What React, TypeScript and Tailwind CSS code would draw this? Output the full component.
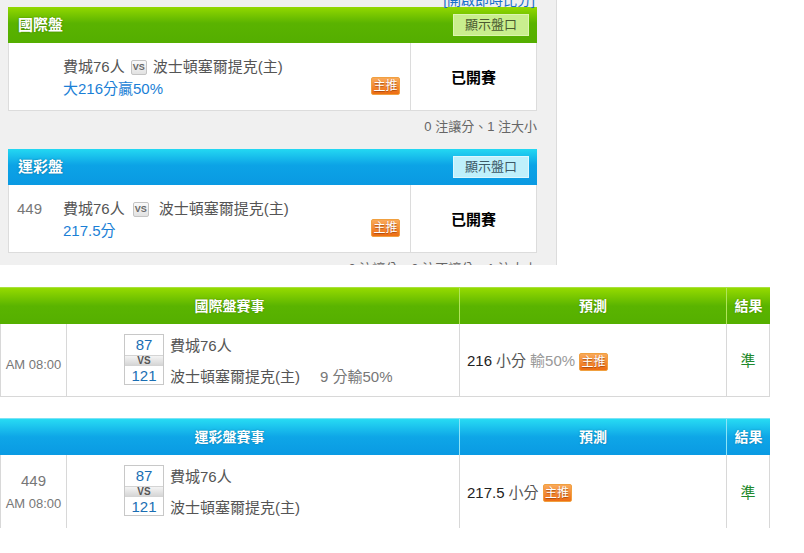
const FONT = "font-['Liberation_Sans','Noto_Sans_CJK_TC',sans-serif]";

function Badge() {
  return (
    <span className="inline-flex h-[18px] w-[29px] items-center justify-center rounded-[2px] border border-[#f0a040] bg-[linear-gradient(#f9a95a,#ee6d12)] text-[12px] leading-none text-white [text-shadow:0_1px_1px_rgba(120,40,0,0.6)]">
      主推
    </span>
  );
}

function VsIcon({ className }: { className: string }) {
  return (
    <span
      className={`inline-flex h-[15px] w-[16px] items-center justify-center rounded-[2px] border border-[#c4c4c4] bg-[linear-gradient(#fafafa,#e2e2e2)] text-[9px] font-bold leading-none text-[#666] ${className}`}
    >
      VS
    </span>
  );
}

type CardProps = {
  title: string;
  tone: "green" | "blue";
  num?: string;
  line: string;
  gap: string;
  note: string;
};

function OddsCard({ title, tone, num, line, gap, note }: CardProps) {
  const head =
    tone === "green"
      ? "bg-[linear-gradient(#93d800,#5ab300_45%,#54ae00)]"
      : "bg-[linear-gradient(#24d8f2,#0ca3e6_45%,#0a99e2)]";
  const btn =
    tone === "green"
      ? "bg-[#c9ee8e] border-[#dcf6b0] text-[#4a5a30]"
      : "bg-[#bff0fb] border-[#dcf8ff] text-[#3c5866]";

  return (
    <div className="ml-[8px] mr-[19px]">
      <div className={`flex h-[36px] items-center justify-between pl-[10px] pr-[8px] ${head}`}>
        <span className="text-[15px] font-bold text-white [text-shadow:0_0_2px_rgba(0,0,0,0.35)]">
          {title}
        </span>
        <span
          className={`flex h-[22px] w-[76px] items-center justify-center border text-[13px] ${btn}`}
        >
          顯示盤口
        </span>
      </div>
      <div className="flex h-[68px] border border-t-0 border-[#dcdcdc] bg-white">
        <div className="flex flex-1">
          <div className="w-[54px] pl-[8px] pt-[13px] text-[15px] leading-[22px] text-[#777]">
            {num}
          </div>
          <div className="flex-1 pt-[13px] text-[15px] leading-[22px]">
            <div className="flex items-center text-[#555]">
              <span>費城76人</span>
              <VsIcon className={gap} />
              <span>波士頓塞爾提克(主)</span>
            </div>
            <div className="text-[#1b7fd6]">{line}</div>
          </div>
          <div className="mb-[13px] mr-[10px] self-end">
            <Badge />
          </div>
        </div>
        <div className="flex w-[126px] items-center justify-center border-l border-[#dcdcdc] pt-[3px] text-[15px] font-bold text-black">
          已開賽
        </div>
      </div>
      <div className="h-[38px] pt-[6px] text-right text-[13px] leading-[20px] text-[#666]">
        {note}
      </div>
    </div>
  );
}

function ScoreBox() {
  return (
    <div className="flex w-[40px] flex-col border border-[#c8c8c8] text-center text-[15px] text-[#1a6eb3]">
      <div className="h-[20px] leading-[20px]">87</div>
      <div className="h-[11px] border-y border-[#d4d4d4] bg-[linear-gradient(#f4f4f4,#d6d6d6)] text-[10px] font-bold leading-[9px] text-[#555]">
        VS
      </div>
      <div className="h-[18px] leading-[19px]">121</div>
    </div>
  );
}

type TableProps = {
  title: string;
  tone: "green" | "blue";
  num?: string;
  extra?: string;
  pred: string;
  lose?: string;
  last?: boolean;
};

function ResultTable({ title, tone, num, extra, pred, lose, last }: TableProps) {
  const head =
    tone === "green"
      ? "bg-[linear-gradient(#95da00,#5ab400_50%,#55af00)] border-t-[#a8e23c]"
      : "bg-[linear-gradient(#27dbf3,#0ea6e7_50%,#0a9ae3)] border-t-[#7be3f5]";
  const sep = tone === "green" ? "border-[#b0e45a]" : "border-[#8de4f7]";
  const cell = "border-[#d8d8d8]";

  return (
    <div className="w-[770px]">
      <div
        className={`grid h-[37px] grid-cols-[459px_267px_44px] border-t text-[14px] font-bold text-white [text-shadow:0_0_2px_rgba(0,0,0,0.3)] ${head}`}
      >
        <div className="flex items-center justify-center">{title}</div>
        <div className={`flex items-center justify-center border-l ${sep}`}>預測</div>
        <div className={`flex items-center justify-center border-l ${sep}`}>結果</div>
      </div>
      <div
        className={`grid h-[73px] grid-cols-[65px_393px_267px_44px] border-l ${cell} ${last ? "" : "border-b"}`}
      >
        <div className="flex flex-col items-center justify-center text-[13px] text-[#777]">
          {num ? (
            <>
              <span className="text-[15px] leading-[24px]">{num}</span>
              <span className="leading-[22px]">AM 08:00</span>
            </>
          ) : (
            <span className="pt-[10px]">AM 08:00</span>
          )}
        </div>
        <div className={`flex items-start border-l pl-[57px] pt-[10px] ${cell}`}>
          <ScoreBox />
          <div className="ml-[6px] flex flex-col text-[15px] text-[#555]">
            <span className="leading-[24px]">費城76人</span>
            <span className="mt-[7px] leading-[24px]">
              波士頓塞爾提克(主)
              {extra && <span className="ml-[20px] text-[#777]">{extra}</span>}
            </span>
          </div>
        </div>
        <div className={`flex items-center gap-[4px] border-l pl-[7px] pt-[3px] text-[15px] ${cell}`}>
          <span className="text-[#222]">{pred}</span>
          <span className="text-[#555]">小分</span>
          {lose && <span className="text-[#999]">{lose}</span>}
          <Badge />
        </div>
        <div
          className={`flex items-center justify-center border-x pt-[3px] text-[15px] text-[#1f8a2e] ${cell}`}
        >
          準
        </div>
      </div>
    </div>
  );
}

export default function App() {
  return (
    <div className={`h-[553px] w-[804px] overflow-hidden bg-white ${FONT}`}>
      <div className="h-[265px] w-[557px] overflow-hidden border-r border-[#dcdcdc] bg-[#f0f0f0]">
        <div className="flex h-[7px] items-end justify-end pr-[21px]">
          <span className="shrink-0 text-[14px] leading-[14px] text-[#1a6fc9]">
            [開啟即時比分]
          </span>
        </div>
        <OddsCard
          title="國際盤"
          tone="green"
          line="大216分贏50%"
          gap="ml-[6px] mr-[6px]"
          note="0 注讓分、1 注大小"
        />
        <OddsCard
          title="運彩盤"
          tone="blue"
          num="449"
          line="217.5分"
          gap="ml-[8px] mr-[10px]"
          note="0 注讓分、0 注不讓分、1 注大小"
        />
      </div>
      <div className="mt-[22px] flex flex-col gap-[21px]">
        <ResultTable
          title="國際盤賽事"
          tone="green"
          extra="9 分輸50%"
          pred="216"
          lose="輸50%"
        />
        <ResultTable title="運彩盤賽事" tone="blue" num="449" pred="217.5" last />
      </div>
    </div>
  );
}
